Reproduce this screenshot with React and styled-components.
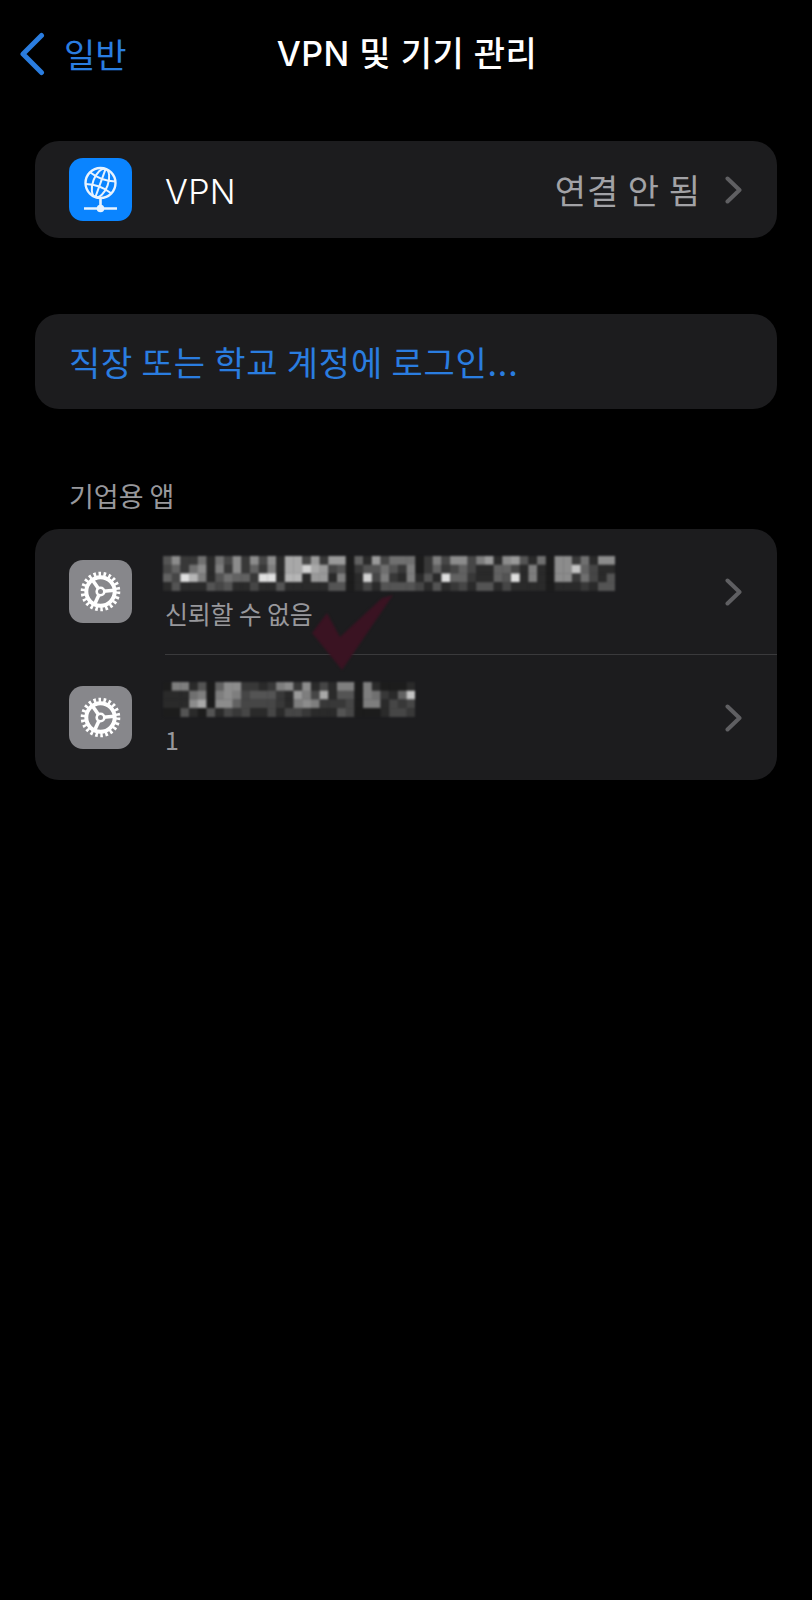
import React from "react";
import styled, { createGlobalStyle } from "styled-components";

const GlobalStyle = createGlobalStyle`
  html, body {
    margin: 0;
    padding: 0;
    background: #000;
  }
  body {
    font-family: Inter, "Noto Sans CJK KR", sans-serif;
    color: #fff;
  }
`;

// grey level of each block of the pixelated names, one hex digit per block
const mosaicOne = [
  "48226163828381aa392990519366602738837918941608826188",
  "35268172825271aada93402446427025235311553171088c5311",
  "53eb7146552ee1bb1991701d37217141e5521154e17108826314",
  "1411143411311411111440131444431412314413111101112144",
];

const mosaicTwo = [
  "07714058822127828131770710001",
  "111670787344421973a144076215c",
  "1118a088533332178722230771323",
  "00410413231131332111430001332",
];

const Mosaic = ({ rows }) => {
  const cell = 8.7;
  const cols = rows[0].length;
  return (
    <MosaicSvg width={cols * cell} height={rows.length * cell}>
      {rows.map((row, y) =>
        row.split("").map((digit, x) => {
          const v = 28 + parseInt(digit, 16) * 14;
          return (
            <rect
              key={`${x}-${y}`}
              x={x * cell}
              y={y * cell}
              width={cell + 0.3}
              height={cell + 0.3}
              fill={`rgb(${v},${v},${v})`}
            />
          );
        })
      )}
    </MosaicSvg>
  );
};

const Chevron = () => (
  <ChevronSvg viewBox="0 0 17 28">
    <polyline points="2.5,2.5 14.5,14 2.5,25.5" />
  </ChevronSvg>
);

const GlobeIcon = () => (
  <svg width="63" height="63" viewBox="0 0 63 63" fill="none" stroke="#e8f3ff" strokeWidth="2">
    <circle cx="31.5" cy="25" r="15" strokeWidth="2.4" />
    <g transform="rotate(20 31.5 25)">
      <ellipse cx="31.5" cy="25" rx="7.5" ry="15" />
      <line x1="31.5" y1="10" x2="31.5" y2="40" />
      <path d="M18 18.5 Q31.5 23 45 18.5" />
      <path d="M18 31 Q31.5 26.5 45 31" />
    </g>
    <line x1="31.5" y1="40" x2="31.5" y2="50" strokeWidth="2.6" />
    <line x1="15" y1="50.5" x2="48" y2="50.5" strokeWidth="2.6" />
    <circle cx="31.5" cy="50.5" r="3.8" fill="#e8f3ff" stroke="none" />
  </svg>
);

const GearIcon = () => {
  const dash = (2 * Math.PI * 17.6) / 44;
  return (
    <svg width="63" height="63" viewBox="0 0 63 63" fill="none" stroke="#fff">
      <circle cx="31.5" cy="31.5" r="17.6" strokeWidth="4.4" strokeDasharray={`${dash} ${dash}`} />
      <circle cx="31.5" cy="31.5" r="14.2" strokeWidth="4" />
      {[-5, 115, 235].map((a) => (
        <line
          key={a}
          x1="31.5"
          y1="31.5"
          x2={31.5 + 14 * Math.cos((a * Math.PI) / 180)}
          y2={31.5 + 14 * Math.sin((a * Math.PI) / 180)}
          strokeWidth="3.6"
        />
      ))}
      <circle cx="31.5" cy="31.5" r="3.8" fill="#87878b" strokeWidth="2.6" />
    </svg>
  );
};

const App = () => {
  return (
    <Page>
      <GlobalStyle />
      <NavBar>
        <BackLink>
          <BackChevron viewBox="0 0 26 44">
            <polyline points="22.5,3.5 4,22 22.5,40.5" />
          </BackChevron>
          <BackText>일반</BackText>
        </BackLink>
        <NavTitle>VPN 및 기기 관리</NavTitle>
      </NavBar>

      <VpnCard>
        <Row $height={97}>
          <IconTile $color="#0a84ff">
            <GlobeIcon />
          </IconTile>
          <RowMain>
            <RowLabel>VPN</RowLabel>
            <RowValue>연결 안 됨</RowValue>
            <Chevron />
          </RowMain>
        </Row>
      </VpnCard>

      <LoginCard>
        <LoginLink>직장 또는 학교 계정에 로그인...</LoginLink>
      </LoginCard>

      <SectionLabel>기업용 앱</SectionLabel>

      <AppsCard>
        <Watermark width="86" height="78" viewBox="0 0 86 78">
          <polygon points="17,19 2,39 32,76 83,1 72,4 30,43" />
        </Watermark>
        <Row $height={125}>
          <IconTile $color="#87878b">
            <GearIcon />
          </IconTile>
          <RowMain>
            <RowText>
              <Mosaic rows={mosaicOne} />
              <RowSub>신뢰할 수 없음</RowSub>
            </RowText>
            <Chevron />
          </RowMain>
        </Row>
        <Divider />
        <Row $height={125}>
          <IconTile $color="#87878b">
            <GearIcon />
          </IconTile>
          <RowMain>
            <RowText>
              <Mosaic rows={mosaicTwo} />
              <RowSub>1</RowSub>
            </RowText>
            <Chevron />
          </RowMain>
        </Row>
      </AppsCard>
    </Page>
  );
};

const Page = styled.div`
  width: 812px;
  height: 1600px;
  background: #000;
  overflow: hidden;
`;
const NavBar = styled.header`
  display: grid;
  grid-template-columns: 1fr auto 1fr;
  align-items: center;
  height: 108px;
  padding-left: 19px;
  padding-right: 17px;
`;
const BackLink = styled.div`
  display: flex;
  align-items: center;
  gap: 19px;
`;
const BackChevron = styled.svg`
  width: 26px;
  height: 44px;
  fill: none;
  stroke: #2a7de0;
  stroke-width: 5;
  stroke-linecap: round;
  stroke-linejoin: round;
`;
const BackText = styled.span`
  font-family: "Noto Sans CJK KR", sans-serif;
  font-size: 34px;
  line-height: 44px;
  color: #2a7de0;
`;
const NavTitle = styled.h1`
  margin: 0;
  font-family: Inter, "Noto Sans CJK KR", sans-serif;
  font-size: 34px;
  font-weight: 500;
  line-height: 44px;
  letter-spacing: 0.5px;
  white-space: nowrap;
`;
const Card = styled.section`
  position: relative;
  margin-left: 35px;
  width: 742px;
  background: #1c1c1e;
  border-radius: 24px;
  overflow: hidden;
`;
const VpnCard = styled(Card)`
  margin-top: 33px;
`;
const LoginCard = styled(Card)`
  margin-top: 76px;
  height: 95px;
  display: flex;
  align-items: center;
  padding-left: 34px;
  box-sizing: border-box;
`;
const AppsCard = styled(Card)`
  margin-top: 9px;
`;
const LoginLink = styled.span`
  font-family: "Noto Sans CJK KR", sans-serif;
  font-size: 34px;
  letter-spacing: 0.8px;
  color: #2a7de0;
  white-space: nowrap;
`;
const SectionLabel = styled.div`
  margin-top: 62px;
  margin-left: 69px;
  font-family: "Noto Sans CJK KR", sans-serif;
  font-size: 27px;
  line-height: 49px;
  color: #98989c;
`;
const Row = styled.div`
  display: flex;
  align-items: stretch;
  height: ${(props) => props.$height}px;
  padding-left: 34px;
`;
const Divider = styled.div`
  height: 1px;
  margin-left: 130px;
  background: #3a3a3c;
`;
const IconTile = styled.div`
  flex: none;
  align-self: center;
  width: 63px;
  height: 63px;
  border-radius: 14px;
  background: ${(props) => props.$color};
`;
const RowMain = styled.div`
  flex: 1;
  display: flex;
  align-items: center;
  margin-left: 33px;
  padding-right: 35px;
`;
const RowLabel = styled.span`
  flex: 1;
  padding-top: 4px;
  font-size: 34px;
  font-weight: 300;
  letter-spacing: 0.3px;
`;
const RowValue = styled.span`
  font-family: "Noto Sans CJK KR", sans-serif;
  font-size: 34px;
  letter-spacing: 1px;
  color: #a2a2a6;
  margin-right: 24px;
`;
const RowText = styled.div`
  flex: 1;
  display: flex;
  flex-direction: column;
  align-items: flex-start;
  margin-top: 4px;
`;
const RowSub = styled.span`
  font-family: "Noto Sans CJK KR", sans-serif;
  font-size: 25px;
  line-height: 36px;
  letter-spacing: -0.2px;
  margin-top: 4px;
  color: #98989c;
`;
const MosaicSvg = styled.svg`
  display: block;
  margin-left: -2px;
  filter: blur(1px);
`;
const ChevronSvg = styled.svg`
  flex: none;
  width: 17px;
  height: 28px;
  fill: none;
  stroke: #5f5f62;
  stroke-width: 4;
  stroke-linecap: round;
  stroke-linejoin: round;
`;
const Watermark = styled.svg`
  position: absolute;
  left: 275px;
  top: 65px;
  fill: #3a1322;
  filter: blur(1px);
`;

export default App;
